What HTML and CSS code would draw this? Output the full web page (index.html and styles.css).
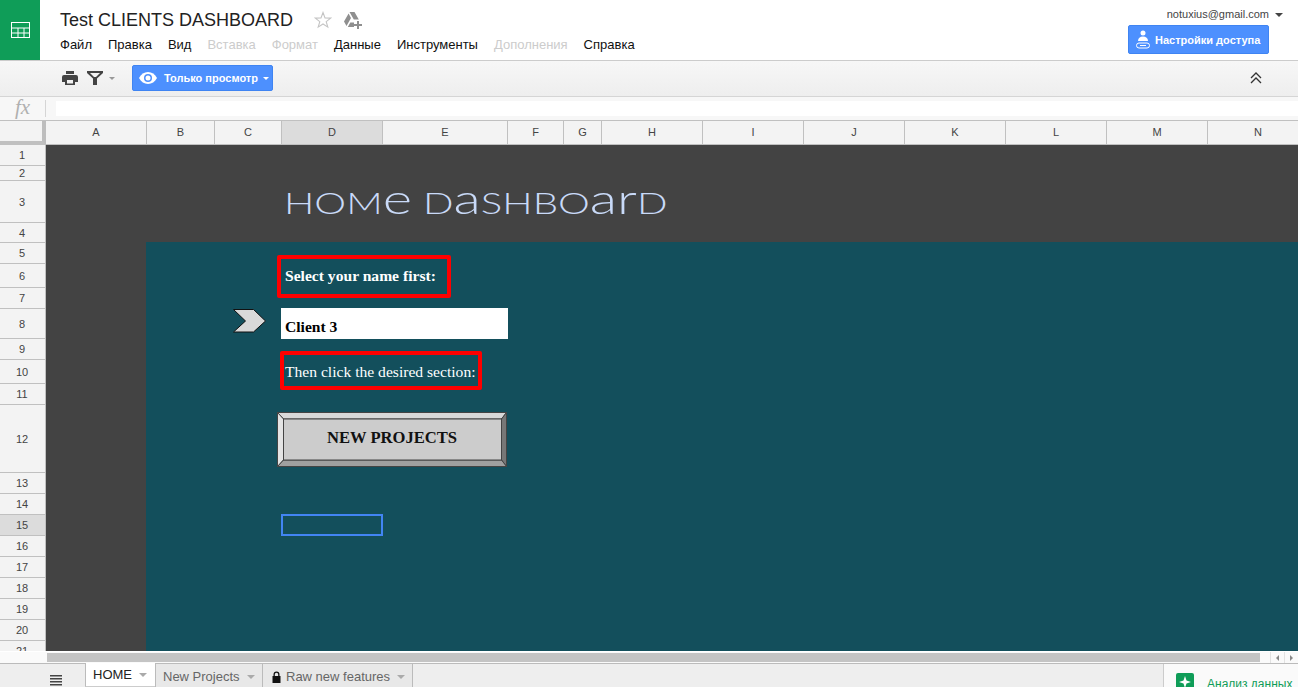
FILE: index.html
```html
<!DOCTYPE html>
<html lang="ru">
<head>
    <meta charset="UTF-8">
    <title>Test CLIENTS DASHBOARD</title>
    <link rel="stylesheet" href="styles.css">
</head>
<body>
    <header class="top-bar">
        <div class="logo">
            <svg width="20" height="17" viewBox="0 0 20 17" fill="none" stroke="#fff" stroke-width="1"><rect x="0.500" y="0.500" width="18" height="15"/><path d="M.5 6h18M.5 11h18M7 6v9.500M13 6v9.500"/></svg>
        </div>
        <div class="doc-info">
            <div class="title-row">
                <span class="doc-title">Test CLIENTS DASHBOARD</span>
                <svg class="star" width="18" height="18" viewBox="0 0 18 18" fill="none" stroke="#c4c4c4" stroke-width="1.100"><path d="M9 1.500l2 5.400 5.700.2-4.500 3.500 1.600 5.500L9 13l-4.800 3.100 1.600-5.500L1.300 7.100 7 6.900z"/></svg>
                <svg class="drive" width="18" height="17" viewBox="0 0 18 17" fill="#8f8f8f"><path d="M5.500 0h5l4.300 7.500h-5zM4.600 1.500L7 6 2.500 14 0 9.500zM3.800 15l2.500-4.500H10V15z"/><path d="M13 9h2v3h3v2h-3v3h-2v-3h-3v-2h3z"/></svg>
            </div>
            <nav class="menu">
                <span>Файл</span>
                <span>Правка</span>
                <span>Вид</span>
                <span class="off">Вставка</span>
                <span class="off">Формат</span>
                <span>Данные</span>
                <span>Инструменты</span>
                <span class="off">Дополнения</span>
                <span>Справка</span>
            </nav>
        </div>
        <div class="account">
            <div class="email">notuxius@gmail.com<i class="caret dark"></i></div>
            <button class="blue-btn share">
                <svg width="14" height="19" viewBox="0 0 14 19" fill="#fff"><circle cx="7" cy="3" r="2.500"/><path d="M2 11c0-3 2-4.500 5-4.500s5 1.500 5 4.500z"/><rect x="0.500" y="13" width="13" height="5" rx="2.500" fill="none" stroke="#fff"/><path d="M4 15.500h6" stroke="#fff"/></svg>
                Настройки доступа
            </button>
        </div>
    </header>

    <div class="toolbar">
        <svg class="print" width="16" height="14" viewBox="0 0 16 14" fill="#444"><path d="M4 0h8v3H4zM2 4h12a2 2 0 0 1 2 2v5h-3v3H3v-3H0V6a2 2 0 0 1 2-2zm3 5v3.500h6V9z" fill-rule="evenodd"/></svg>
        <svg class="filter" width="16" height="14" viewBox="0 0 16 14" fill="#444"><path d="M0 0h16v2l-6 5.500V14H6V7.500L0 2zM3 2l4 4h2l4-4z" fill-rule="evenodd"/></svg>
        <i class="caret grey"></i>
        <button class="blue-btn view-only">
            <svg width="18" height="12" viewBox="0 0 18 12"><path d="M0 6c2-3.800 5.200-6 9-6s7 2.200 9 6c-2 3.800-5.200 6-9 6S2 9.800 0 6z" fill="#fff"/><circle cx="9" cy="6" r="4" fill="#4d90fe"/><circle cx="9" cy="6" r="2.500" fill="#fff"/></svg>
            <span>Только просмотр</span>
            <i class="caret white"></i>
        </button>
        <svg class="collapse" width="12" height="12" viewBox="0 0 12 12" fill="none" stroke="#333" stroke-width="1.300"><path d="M1 6l5-5 5 5M1 11l5-5 5 5"/></svg>
    </div>

    <div class="formula-bar">
        <span class="fx">fx</span>
        <div class="formula-input"></div>
    </div>

    <main class="sheet">
        <div class="corner"></div>
        <div class="col-head">A</div>
        <div class="col-head">B</div>
        <div class="col-head">C</div>
        <div class="col-head active">D</div>
        <div class="col-head">E</div>
        <div class="col-head">F</div>
        <div class="col-head">G</div>
        <div class="col-head">H</div>
        <div class="col-head">I</div>
        <div class="col-head">J</div>
        <div class="col-head">K</div>
        <div class="col-head">L</div>
        <div class="col-head">M</div>
        <div class="col-head">N</div>

        <div class="row-head r1">1</div>
        <div class="row-head r2">2</div>
        <div class="row-head r3">3</div>
        <div class="row-head r4">4</div>
        <div class="row-head r5">5</div>
        <div class="row-head r6">6</div>
        <div class="row-head r7">7</div>
        <div class="row-head r8">8</div>
        <div class="row-head r9">9</div>
        <div class="row-head r10">10</div>
        <div class="row-head r11">11</div>
        <div class="row-head r12">12</div>
        <div class="row-head r13">13</div>
        <div class="row-head r14">14</div>
        <div class="row-head r15 active">15</div>
        <div class="row-head r16">16</div>
        <div class="row-head r17">17</div>
        <div class="row-head r18">18</div>
        <div class="row-head r19">19</div>
        <div class="row-head r20">20</div>
        <div class="row-head r21">21</div>

        <div class="dark-area"></div>
        <div class="teal-area"></div>

        <div class="cell-title"><span class="wide">H<span class="up">om</span><span class="lc">e</span> D<span class="lc">a</span><span class="up">shbo</span><span class="lc">ar</span><span class="up">d</span></span></div>
        <div class="cell-label bold">Select your name first:</div>
        <div class="cell-input">Client 3</div>
        <div class="cell-label">Then click the desired section:</div>
        <div class="cell-selected"></div>

        <!-- drawings floating over the cells -->
        <div class="red-box box-one"></div>
        <div class="red-box box-two"></div>
        <svg class="chevron" width="34" height="24" viewBox="0 0 34 24"><path d="M.5.500h20l12 11.500-12 11H.5l12-11z" fill="#d9d9d9" stroke="#111"/></svg>
        <div class="bevel-btn">
            <svg class="bevel-art" width="230" height="55" viewBox="0 0 230 55" stroke="#444">
                <path d="M.5.500h229l-5 6.500H6.500z" fill="#d9d9d9"/>
                <path d="M.5.500l6 6.500v41l-6 6.500z" fill="#e4e4e4"/>
                <path d="M229.500.500l-5 6.500v41l5 6.500z" fill="#777"/>
                <path d="M.5 54.500l6-6.500h218l5 6.500z" fill="#a0a0a0"/>
                <rect x="6.500" y="7" width="218" height="41" fill="#ccc"/>
            </svg>
            <span class="bevel-text">NEW PROJECTS</span>
        </div>
    </main>

    <div class="scroll-row">
        <div class="scroll-track"><div class="scroll-thumb"></div></div>
        <div class="scroll-arrow"><i class="tri left"></i></div>
        <div class="scroll-arrow"><i class="tri right"></i></div>
    </div>

    <footer class="tab-bar">
        <div class="all-sheets">
            <svg width="12" height="11" viewBox="0 0 12 11" fill="#444"><path d="M0 0h12v1.500H0zM0 3h12v1.500H0zM0 6h12v1.500H0zM0 9h12v1.500H0z"/></svg>
        </div>
        <div class="tab current">HOME<i class="caret grey"></i></div>
        <div class="tab">New Projects<i class="caret grey"></i></div>
        <div class="tab">
            <svg width="11" height="12" viewBox="0 0 10 12" fill="#111"><path d="M1 5h1V3.500a3 3 0 0 1 6 0V5h1v7H1zm2.300 0h3.400V3.500a1.700 1.700 0 0 0-3.400 0z" fill-rule="evenodd"/></svg>
            <span class="tab-name">Raw new features</span><i class="caret grey"></i>
        </div>
        <div class="explore">
            <svg width="18" height="18" viewBox="0 0 18 18"><rect width="18" height="18" rx="2" fill="#0f9d58"/><path d="M9 3l1.500 4.500L15 9l-4.500 1.500L9 15l-1.500-4.500L3 9l4.500-1.500z" fill="#fff"/></svg>
            <span>Анализ данных</span>
        </div>
    </footer>
</body>
</html>
```

FILE: styles.css
```css
* {
    box-sizing: border-box;
}

html, body {
    margin: 0;
    height: 687px;
    overflow: hidden;
}

body {
    display: flex;
    flex-direction: column;
    font-family: "Liberation Sans", Arial, sans-serif;
    background: #fff;
    color: #222;
}

button {
    font-family: inherit;
}

.top-bar {
    display: flex;
    height: 60px;
    flex: none;
}

.logo {
    width: 40px;
    background: #0f9d58;
    display: flex;
    align-items: center;
    justify-content: center;
    padding-left: 2px;
}

.doc-info {
    margin-left: 20px;
    flex: 1;
}

.title-row {
    display: flex;
    align-items: center;
    height: 36px;
    padding-top: 4px;
}

.doc-title {
    font-size: 18px;
    color: #222;
}

.star {
    margin-left: 21px;
}

.drive {
    margin-left: 12px;
}

.menu {
    display: flex;
    font-size: 13px;
    color: #111;
    padding-top: 1px;
}

.menu span {
    margin-right: 16px;
}

.menu .off {
    color: #ccc;
}

.account {
    width: 170px;
    padding-right: 29px;
    display: flex;
    flex-direction: column;
    align-items: flex-end;
}

.email {
    font-size: 11px;
    color: #444;
    margin: 8px -14px 5px 0;
    white-space: nowrap;
}

.caret {
    display: inline-block;
    width: 0;
    height: 0;
    border-left: 3px solid transparent;
    border-right: 3px solid transparent;
    border-top: 3px solid #999;
}

.caret.dark {
    border-left-width: 4.500px;
    border-right-width: 4.500px;
    border-top: 4px solid #444;
    margin-left: 6px;
    vertical-align: 1px;
}

.caret.white {
    border-top-color: #fff;
}

.blue-btn {
    display: flex;
    align-items: center;
    background: #4d90fe;
    border: 1px solid #3f84f2;
    border-radius: 2px;
    color: #fff;
    font-weight: bold;
    font-size: 11px;
    padding: 0;
    white-space: nowrap;
}

.share {
    width: 141px;
    height: 29px;
    padding-left: 7px;
    gap: 5px;
}

.toolbar {
    height: 37px;
    flex: none;
    display: flex;
    align-items: center;
    background: linear-gradient(#f7f7f7, #eee);
    border-top: 1px solid #ccc;
    border-bottom: 1px solid #d5d5d5;
    padding-left: 62px;
    padding-bottom: 1px;
}

.filter {
    margin-left: 9px;
}

.toolbar > .caret {
    margin-left: 6px;
}

.view-only {
    width: 141px;
    height: 26px;
    margin-left: 17px;
    padding-left: 6px;
    gap: 7px;
}

.view-only span {
    margin-right: -2px;
}

.collapse {
    margin-left: auto;
    margin-right: 36px;
}

.formula-bar {
    height: 24px;
    flex: none;
    display: flex;
    align-items: center;
    background: #f7f7f7;
    border-bottom: 1px solid #c0c0c0;
    padding-bottom: 1px;
}

.fx {
    width: 46px;
    height: 17px;
    line-height: 15px;
    text-align: center;
    font-family: "Liberation Serif", serif;
    font-style: italic;
    font-size: 21px;
    color: #b0b0b0;
    border-right: 1px solid #d5d5d5;
}

.formula-input {
    margin-left: 10px;
    flex: 1;
    height: 15px;
    background: #fff;
}

.sheet {
    position: relative;
    flex: none;
    height: 530px;
    overflow: hidden;
    display: grid;
    grid-template-columns: 46px 101px 68px 67px 101px 125px 56px 38px 101px 101px 101px 101px 101px 101px 101px;
    grid-template-rows: 24px 21px 15px 42px 20px 21px 24px 21px 30px 21px 24px 21px 68px 21px 21px 21px 21px 21px 21px 21px 21px 21px;
    font-size: 11px;
    color: #444;
}

.corner {
    background: #f3f3f3;
    border-right: 4px solid #bdbdbd;
    border-bottom: 4px solid #c0c0c0;
}

.col-head {
    background: #f3f3f3;
    border-right: 1px solid #c0c0c0;
    border-bottom: 1px solid #c0c0c0;
    text-align: center;
    line-height: 23px;
}

.row-head {
    grid-column: 1;
    background: #f3f3f3;
    border-right: 1px solid #c0c0c0;
    border-bottom: 1px solid #c0c0c0;
    display: flex;
    align-items: center;
    justify-content: center;
    padding-right: 1px;
}

.col-head.active,
.row-head.active {
    background: #dcdcdc;
}

.dark-area {
    grid-column: 2 / -1;
    grid-row: 2 / -1;
    background: #434343;
}

.teal-area {
    grid-column: 3 / -1;
    grid-row: 6 / -1;
    margin: -1px 0 0 -1px;
    background: #134f5c;
}

.cell-title {
    grid-column: 5 / -1;
    grid-row: 4;
    color: #c9daf8;
    font-family: Lato, "Liberation Sans", sans-serif;
    font-weight: 300;
    font-size: 30px;
    line-height: 42px;
    padding-left: 2px;
    white-space: nowrap;
}

.wide {
    display: inline-block;
    transform: scaleX(1.340);
    transform-origin: left center;
}

.up {
    text-transform: uppercase;
}

.lc {
    font-size: 42px;
    line-height: 20px;
}

.cell-label,
.cell-input {
    grid-column: 5 / 7;
    font-family: "Liberation Serif", serif;
    font-size: 15.600px;
    color: #fff;
    white-space: nowrap;
    padding-left: 3px;
    display: flex;
    align-items: center;
}

.cell-label {
    grid-row: 7;
}

.cell-label.bold {
    font-weight: bold;
}

.cell-label:not(.bold) {
    grid-row: 11;
}

.cell-input {
    grid-row: 9;
    margin: -1px 0 0 -1px;
    padding-left: 4px;
    background: #fff;
    color: #000;
    font-weight: bold;
    align-items: flex-end;
    padding-bottom: 3px;
}

.cell-selected {
    grid-column: 5;
    grid-row: 16;
    margin: -1px 0 0 -1px;
    border: 2px solid #4285f4;
}

.red-box {
    position: absolute;
    border: 4px solid #f00;
    border-radius: 2px;
}

.box-one {
    left: 277px;
    top: 134px;
    width: 174px;
    height: 43px;
}

.box-two {
    left: 280px;
    top: 230px;
    width: 202px;
    height: 39px;
}

.chevron {
    position: absolute;
    left: 233px;
    top: 188px;
}

.bevel-btn {
    position: absolute;
    left: 277px;
    top: 291px;
    width: 230px;
    height: 55px;
    display: flex;
    justify-content: center;
    padding: 16px 0 0 0;
    font-family: "Liberation Serif", serif;
    font-weight: bold;
    font-size: 16.600px;
    color: #111;
    white-space: nowrap;
}

.bevel-art {
    position: absolute;
    left: 0;
    top: 0;
}

.bevel-text {
    position: relative;
}

.scroll-row {
    height: 12px;
    flex: none;
    display: flex;
    background: #fafafa;
    border-top: 1px solid #fff;
}

.scroll-track {
    flex: 1;
    padding: 1px 0 0 47px;
}

.scroll-thumb {
    width: 1213px;
    height: 9px;
    background: #c4c4c4;
}

.scroll-arrow {
    width: 14px;
    border-left: 1px solid #e2e2e2;
    display: flex;
    align-items: center;
    justify-content: center;
}

.tri {
    width: 0;
    height: 0;
    border-top: 3px solid transparent;
    border-bottom: 3px solid transparent;
}

.tri.left {
    border-right: 3px solid #888;
}

.tri.right {
    border-left: 3px solid #888;
}

.tab-bar {
    flex: 1;
    display: flex;
    background: #eee;
    border-top: 1px solid #bbb;
}

.all-sheets {
    width: 85px;
    padding: 11px 0 0 50px;
}

.all-sheets svg {
    display: block;
}

.tab {
    display: flex;
    align-items: center;
    gap: 3px;
    height: 24px;
    padding: 1px 0 0 7px;
    background: #e8e8e8;
    border-left: 1px solid #bbb;
    font-size: 13px;
    color: #666;
    white-space: nowrap;
}

.tab:nth-of-type(2) {
    width: 70px;
    background: #fff;
    color: #222;
    padding: 0 0 0 7px;
    margin-top: -1px;
    height: 24px;
    border-bottom: 1px solid #ccc;
}

.tab:nth-of-type(3) {
    width: 107px;
}

.tab:nth-of-type(4) {
    width: 151px;
    padding-left: 8px;
    border-right: 1px solid #bbb;
}

.tab-name {
    margin-left: 1px;
}

.tab .caret {
    border-left-width: 4px;
    border-right-width: 4px;
    border-top: 4px solid #aaa;
    margin-left: 4px;
}

.explore {
    margin-left: auto;
    width: 135px;
    display: flex;
    gap: 13px;
    padding: 9px 0 0 12px;
    background: #fafafa;
    border-left: 1px solid #ccc;
    font-size: 12px;
    color: #0f9d58;
    white-space: nowrap;
}

.explore span {
    padding-top: 4px;
}
```
